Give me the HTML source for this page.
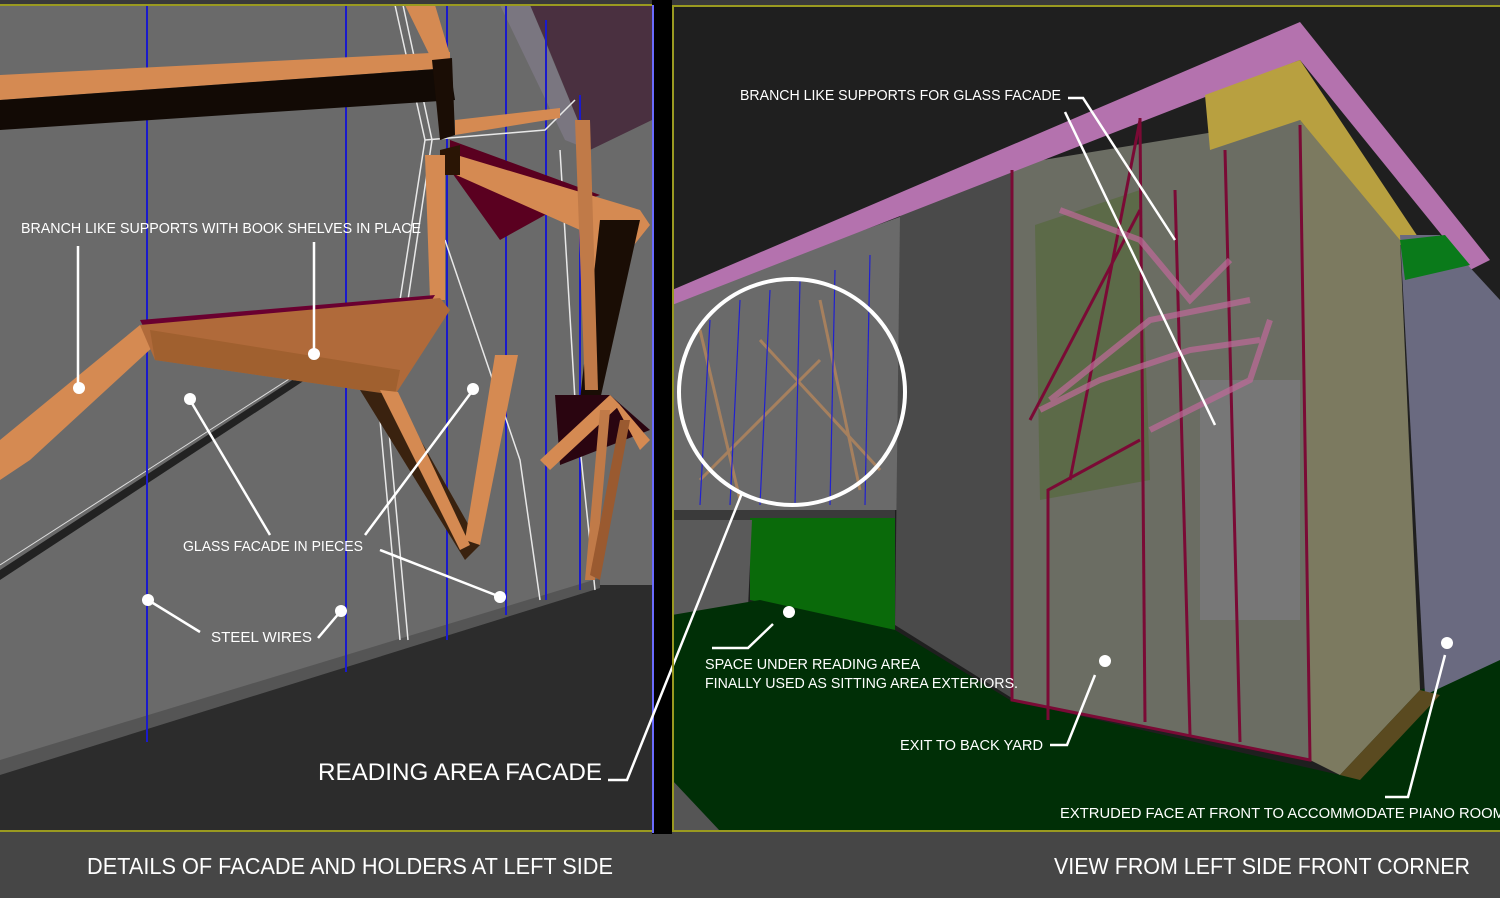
<!DOCTYPE html>
<html><head><meta charset="utf-8"><style>
html,body{margin:0;padding:0;background:#464646;}
svg{display:block}
text{font-family:"Liberation Sans",sans-serif;fill:#fff}
</style></head><body>
<svg width="1500" height="898" viewBox="0 0 1500 898" xmlns="http://www.w3.org/2000/svg">
<rect width="1500" height="898" fill="#464646"/>
<rect x="0" y="0" width="1500" height="5" fill="#3a3a3a"/>
<!-- LEFT PANEL -->
<rect x="0" y="5" width="652" height="826" fill="#6a6a6a"/>
<polygon points="530,5 652,5 652,120 590,150 545,40" fill="#4a3040"/>
<polygon points="500,5 530,5 590,150 565,140" fill="#7a7680"/>
<polygon points="0,770 600,585 652,585 652,832 0,832" fill="#2c2c2c"/>
<polygon points="0,760 600,578 600,588 0,775" fill="#555"/>
<polygon points="0,570 300,375 305,380 0,580" fill="#222"/>
<line x1="0" y1="565" x2="300" y2="372" stroke="#ddd" stroke-width="1"/>
<g stroke="#1a1acc" stroke-width="2">
<line x1="147" y1="5" x2="147" y2="742"/><line x1="346" y1="5" x2="346" y2="672"/>
<line x1="447" y1="5" x2="447" y2="640"/><line x1="506" y1="5" x2="506" y2="615"/>
<line x1="546" y1="20" x2="546" y2="600"/><line x1="580" y1="95" x2="580" y2="590"/>
</g>
<g stroke="#e8e8e8" stroke-width="1.5" fill="none">
<polyline points="395,5 425,140 400,300 380,420 400,640"/>
<polyline points="403,5 432,140 408,300 388,420 408,640"/>
<polyline points="425,140 545,130 575,100"/>
<polyline points="445,240 520,460 540,600"/>
<polyline points="560,150 575,400 595,590"/>
</g>
<polygon points="0,75 450,52 450,68 0,100" fill="#d58a52"/>
<polygon points="0,100 450,68 455,100 0,130" fill="#120a05"/>
<polygon points="405,5 435,5 450,55 432,60" fill="#d58a52"/>
<polygon points="432,60 452,58 455,135 440,140" fill="#1a0d05"/>
<polygon points="455,120 560,108 560,118 455,135" fill="#d58a52"/>
<polygon points="450,140 600,195 545,215 500,240 450,170" fill="#5a0020"/>
<polygon points="440,150 640,210 650,225 590,300 580,230 445,170" fill="#d58a52"/>
<polygon points="440,150 460,145 460,175 440,175" fill="#2a1505"/>
<polygon points="425,155 445,155 445,300 430,300" fill="#d58a52"/>
<polygon points="600,220 640,220 600,400 580,400" fill="#1a0d05"/>
<polygon points="575,120 590,120 598,390 585,390" fill="#c07a48"/>
<polygon points="140,320 435,295 385,375 155,350" fill="#6a0030"/>
<polygon points="0,440 140,325 155,345 30,460 0,480" fill="#d58a52"/>
<polygon points="140,325 440,298 450,310 395,395 155,360" fill="#b06a3a"/>
<polygon points="150,330 400,370 395,395 155,360" fill="#a0602f"/>
<polygon points="360,390 395,395 480,545 465,560" fill="#3a220f"/>
<polygon points="380,390 398,392 470,545 460,550" fill="#d58a52"/>
<polygon points="495,355 518,355 480,545 465,540" fill="#d58a52"/>
<polygon points="555,395 610,395 650,430 560,465" fill="#2a0510"/>
<polygon points="540,460 610,395 620,405 550,470" fill="#d58a52"/>
<polygon points="610,395 620,405 650,440 640,450" fill="#d58a52"/>
<polygon points="600,410 610,410 595,580 585,580" fill="#c07a48"/>
<polygon points="620,420 630,420 600,580 590,575" fill="#9a5a30"/>
<text x="21" y="233" font-size="15" textLength="400" lengthAdjust="spacingAndGlyphs">BRANCH LIKE SUPPORTS WITH BOOK SHELVES IN PLACE</text>
<g stroke="#fff" stroke-width="2.5" fill="none">
<line x1="78" y1="246" x2="78" y2="385"/><line x1="314" y1="242" x2="314" y2="350"/>
<polyline points="190,400 270,535"/><polyline points="473,390 365,535"/>
<polyline points="380,550 498,596"/>
<polyline points="148,600 200,632"/><polyline points="318,638 340,612"/>
</g>
<g fill="#fff">
<circle cx="79" cy="388" r="6"/><circle cx="314" cy="354" r="6"/><circle cx="190" cy="399" r="6"/>
<circle cx="473" cy="389" r="6"/><circle cx="500" cy="597" r="6"/><circle cx="148" cy="600" r="6"/><circle cx="341" cy="611" r="6"/>
</g>
<text x="183" y="551" font-size="15" textLength="180" lengthAdjust="spacingAndGlyphs">GLASS FACADE IN PIECES</text>
<text x="211" y="642" font-size="15" textLength="101" lengthAdjust="spacingAndGlyphs">STEEL WIRES</text>
<text x="318" y="780" font-size="24" textLength="284" lengthAdjust="spacingAndGlyphs">READING AREA FACADE</text>
<rect x="652" y="0" width="20" height="834" fill="#000"/>
<rect x="652" y="5" width="2" height="828" fill="#6a6aff"/>
<!-- RIGHT PANEL -->
<rect x="672" y="5" width="828" height="826" fill="#1f1f1f"/>
<polygon points="672,300 905,215 905,510 672,510" fill="#6a6a6a"/>
<polygon points="672,510 895,510 895,520 672,520" fill="#3a3a3a"/>
<polygon points="750,518 895,518 895,630 750,600" fill="#0a6a0a"/>
<polygon points="672,520 752,520 748,608 672,615" fill="#5a5a5a"/>
<polygon points="672,615 760,600 895,630 1010,700 1340,775 1420,690 1500,660 1500,831 672,831" fill="#002f06"/>
<polygon points="672,780 720,831 672,831" fill="#555"/>
<polygon points="900,215 1015,170 1015,700 895,625" fill="#4a4a4a"/>
<polygon points="1012,165 1300,118 1310,760 1012,700" fill="#6b6d63"/>
<polygon points="1035,225 1140,190 1150,480 1040,500" fill="#5c6a48"/>
<polygon points="1200,380 1300,380 1300,620 1200,620" fill="#777"/>
<polygon points="672,290 1300,22 1490,260 1470,270 1300,60 672,305" fill="#b472ae"/>
<polygon points="1205,95 1300,60 1420,240 1400,245 1300,120 1210,150" fill="#b8a040"/>
<polygon points="1300,120 1400,240 1420,690 1340,775 1310,760" fill="#7c7a60"/>
<polygon points="1400,235 1440,235 1500,300 1500,660 1425,695" fill="#6a6a80"/>
<polygon points="1400,240 1445,235 1470,265 1405,280" fill="#0a7a1a"/>
<polygon points="1340,775 1420,690 1440,695 1360,780" fill="#5a4a20"/>
<g stroke="#7a0a35" stroke-width="3" fill="none">
<polyline points="1012,170 1012,700 1310,760 1300,125"/>
<line x1="1140" y1="118" x2="1145" y2="722"/><line x1="1225" y1="150" x2="1240" y2="742"/>
<line x1="1140" y1="210" x2="1030" y2="420"/><line x1="1140" y1="120" x2="1070" y2="480"/>
<polyline points="1048,720 1048,490 1140,440"/>
<line x1="1175" y1="190" x2="1190" y2="735"/>
</g>
<g stroke="#c06a9a" stroke-width="6" fill="none" opacity=".7">
<polyline points="1060,210 1140,240 1190,300 1230,260"/><polyline points="1050,400 1150,320 1250,300"/>
<polyline points="1040,410 1100,380 1190,350 1260,340"/><polyline points="1150,430 1250,380 1270,320"/>
</g>
<g stroke="#c08a5a" stroke-width="3" opacity=".7">
<line x1="700" y1="330" x2="740" y2="500"/><line x1="760" y1="340" x2="880" y2="470"/><line x1="820" y1="300" x2="860" y2="490"/>
<line x1="700" y1="480" x2="820" y2="360"/>
</g>
<g stroke="#2020d0" stroke-width="1.2">
<line x1="710" y1="320" x2="700" y2="505"/><line x1="740" y1="300" x2="730" y2="505"/><line x1="770" y1="290" x2="760" y2="505"/>
<line x1="800" y1="280" x2="795" y2="505"/><line x1="835" y1="270" x2="830" y2="505"/><line x1="870" y1="255" x2="865" y2="505"/>
</g>
<circle cx="792" cy="392" r="113" fill="none" stroke="#fff" stroke-width="4"/>
<text x="740" y="100" font-size="15" textLength="321" lengthAdjust="spacingAndGlyphs">BRANCH LIKE SUPPORTS FOR GLASS FACADE</text>
<text x="705" y="669" font-size="15" textLength="215" lengthAdjust="spacingAndGlyphs">SPACE UNDER READING AREA</text>
<text x="705" y="688" font-size="15" textLength="313" lengthAdjust="spacingAndGlyphs">FINALLY USED AS SITTING AREA EXTERIORS.</text>
<text x="900" y="750" font-size="15" textLength="143" lengthAdjust="spacingAndGlyphs">EXIT TO BACK YARD</text>
<text x="1060" y="818" font-size="15" textLength="445" lengthAdjust="spacingAndGlyphs">EXTRUDED FACE AT FRONT TO ACCOMMODATE PIANO ROOM</text>
<g stroke="#fff" stroke-width="2.5" fill="none">
<polyline points="1068,98 1083,98 1175,240"/><line x1="1065" y1="112" x2="1215" y2="425"/>
<polyline points="712,648 748,648 773,624"/>
<polyline points="1050,745 1067,745 1095,675"/>
<polyline points="1385,797 1408,797 1445,655"/>
<polyline points="608,780 627,780 742,493"/>
</g>
<g fill="#fff"><circle cx="789" cy="612" r="6"/><circle cx="1105" cy="661" r="6"/><circle cx="1447" cy="643" r="6"/></g>
<rect x="0" y="4" width="652" height="2" fill="#9a9a20"/>
<rect x="672" y="5" width="828" height="2" fill="#9a9a20"/>
<rect x="0" y="830" width="652" height="2" fill="#9a9a20"/>
<rect x="672" y="830" width="828" height="2" fill="#9a9a20"/>
<rect x="672" y="5" width="2" height="827" fill="#9a9a20"/>
<rect x="0" y="834" width="1500" height="64" fill="#464646"/>
<text x="87" y="874" font-size="23" textLength="526" lengthAdjust="spacingAndGlyphs">DETAILS OF FACADE AND HOLDERS AT LEFT SIDE</text>
<text x="1054" y="874" font-size="23" textLength="416" lengthAdjust="spacingAndGlyphs">VIEW FROM LEFT SIDE FRONT CORNER</text>
</svg>
</body></html>
